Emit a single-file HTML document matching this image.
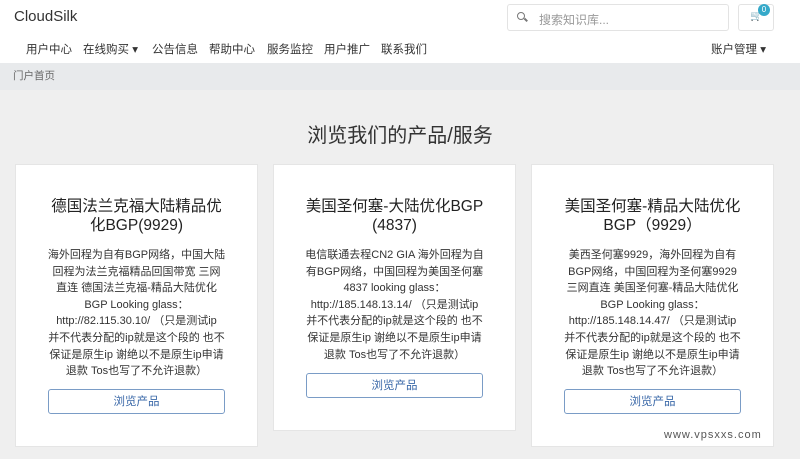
<!DOCTYPE html><html><head><meta charset="utf-8"><style>
body{margin:0;width:800px;height:459px;overflow:hidden;background:#efefef;font-family:"Liberation Sans","Noto Sans CJK SC",sans-serif;color:#333}
.hd{background:#fff;height:63px;position:relative}
.logo{position:absolute;left:14px;top:8px;font-size:15px;color:#333}
.search{position:absolute;left:507px;top:4px;width:220px;height:25px;border:1px solid #e3e3e3;border-radius:3px;font-size:12px;color:#999}
.search span{position:absolute;left:31px;top:6px}
.search i{position:absolute;left:9px;top:7px;width:6px;height:6px;border:1.5px solid #777;border-radius:50%}
.search b{position:absolute;left:16px;top:14px;width:4px;height:1.5px;background:#777;transform:rotate(45deg)}
.cart{position:absolute;left:738px;top:4px;width:34px;height:25px;border:1px solid #e3e3e3;border-radius:3px}
.badge{position:absolute;left:758px;top:4px;width:12px;height:12px;border-radius:6px;background:#35a9c9;color:#fff;font-size:8px;text-align:center;line-height:12px}
.nav{position:absolute;top:41px;font-size:11.5px;color:#333}
.nav span{position:absolute;white-space:nowrap}
.bc{background:#e8eaec;height:27px;font-size:10.5px;color:#666;padding-left:13px;line-height:27px}
h1{margin:0;position:absolute;top:119px;width:800px;text-align:center;font-size:20px;font-weight:normal;color:#333}
.card{position:absolute;top:164px;width:243px;background:#fff;border:1px solid #e5e5e5;text-align:center;box-sizing:border-box}
.card h3{margin:32px 0 0;font-size:15.5px;font-weight:normal;line-height:19px;color:#222}
.card p{margin:12px 0 0;font-size:11px;line-height:16.6px;color:#333}
.btn{position:absolute;left:32px;width:177px;height:25px;border:1px solid #7a9cc6;border-radius:3px;color:#3a68a8;font-size:11.5px;line-height:25px;box-sizing:border-box}
.wm{position:absolute;left:664px;top:429px;font-size:11px;color:#555;letter-spacing:1px}
</style></head><body>
<div class="hd"><div class="logo">CloudSilk</div>
<div class="search"><i></i><b></b><span>搜索知识库...</span></div>
<div class="cart"><span style="position:absolute;left:11px;top:6px;font-size:10px;color:#ccc">🛒</span></div><div class="badge">0</div>
<div class="nav"><span style="left:26px">用户中心</span><span style="left:83px">在线购买 ▾</span><span style="left:152px">公告信息</span><span style="left:209px">帮助中心</span><span style="left:267px">服务监控</span><span style="left:324px">用户推广</span><span style="left:381px">联系我们</span><span style="left:711px">账户管理 ▾</span></div>
</div>
<div class="bc">门户首页</div>
<h1>浏览我们的产品/服务</h1>
<div class="card" style="left:15px;height:283px"><h3>德国法兰克福大陆精品优<br>化BGP(9929)</h3><p>海外回程为自有BGP网络，中国大陆<br>回程为法兰克福精品回国带宽 三网<br>直连 德国法兰克福-精品大陆优化<br>BGP Looking glass：<br>http://82.115.30.10/ （只是测试ip<br>并不代表分配的ip就是这个段的 也不<br>保证是原生ip 谢绝以不是原生ip申请<br>退款 Tos也写了不允许退款）</p><div class="btn" style="top:224px">浏览产品</div></div>
<div class="card" style="left:273px;height:267px"><h3>美国圣何塞-大陆优化BGP<br>(4837)</h3><p>电信联通去程CN2 GIA 海外回程为自<br>有BGP网络，中国回程为美国圣何塞<br>4837 looking glass：<br>http://185.148.13.14/ （只是测试ip<br>并不代表分配的ip就是这个段的 也不<br>保证是原生ip 谢绝以不是原生ip申请<br>退款 Tos也写了不允许退款）</p><div class="btn" style="top:208px">浏览产品</div></div>
<div class="card" style="left:531px;height:283px"><h3>美国圣何塞-精品大陆优化<br>BGP（9929）</h3><p>美西圣何塞9929，海外回程为自有<br>BGP网络，中国回程为圣何塞9929<br>三网直连 美国圣何塞-精品大陆优化<br>BGP Looking glass：<br>http://185.148.14.47/ （只是测试ip<br>并不代表分配的ip就是这个段的 也不<br>保证是原生ip 谢绝以不是原生ip申请<br>退款 Tos也写了不允许退款）</p><div class="btn" style="top:224px">浏览产品</div></div>
<div class="wm">www.vpsxxs.com</div>
</body></html>
